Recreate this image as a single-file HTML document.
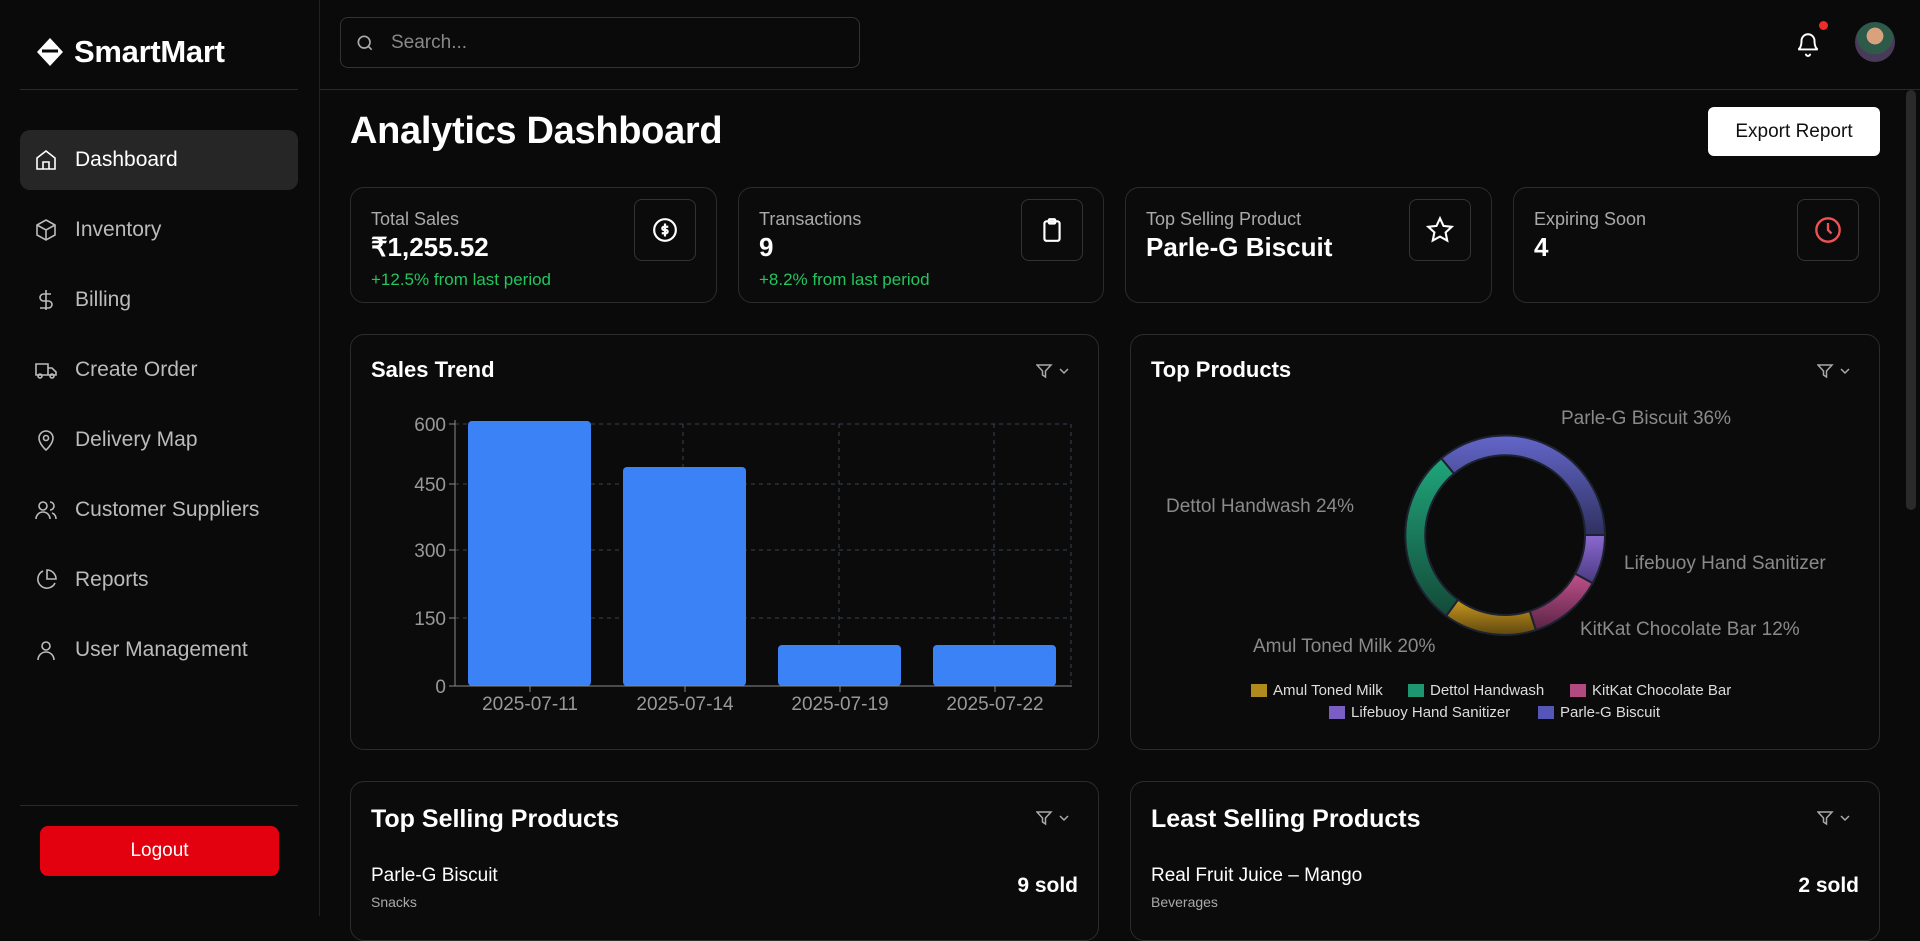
<!DOCTYPE html>
<html><head><meta charset="utf-8"><style>
*{box-sizing:border-box;margin:0;padding:0}
body{width:1920px;height:916px;overflow:hidden;background:#0a0a0a;color:#fff;font-family:"Liberation Sans",sans-serif;position:relative}
.abs{position:absolute}
.side{left:0;top:0;width:320px;height:916px;border-right:1px solid #222}
.nav{position:absolute;left:20px;width:278px;height:60px;display:flex;align-items:center;padding-left:14px;font-size:21px;color:#bbb}
.nav svg{width:24px;height:24px;margin-right:17px;stroke:#bbb;fill:none;stroke-width:1.6}
.nav.act{background:#262626;border-radius:10px;color:#fff}
.nav.act svg{stroke:#fff}
.card{position:absolute;border:1px solid #2c2c2c;border-radius:14px;background:#0b0b0b}
.lbl{font-size:18px;color:#aaa;position:absolute;left:20px;top:21px}
.val{font-size:26px;font-weight:bold;position:absolute;left:20px;top:44px}
.chg{font-size:17px;color:#22c55e;position:absolute;left:20px;top:82px}
.ib{position:absolute;right:20px;top:11px;width:62px;height:62px;border:1px solid #333;border-radius:8px;display:flex;align-items:center;justify-content:center}
.ct{position:absolute;left:20px;top:22px;font-size:22px;font-weight:bold}
.flt{position:absolute;right:26px;top:28px}
.pl{font-size:19px;fill:#8a8a8a;font-family:"Liberation Sans",sans-serif}
</style></head><body>
<div class="abs side">
 <div class="abs" style="left:36px;top:34px;display:flex;align-items:center">
  <svg width="28" height="32" viewBox="0 0 28 30"><path d="M14 1 L27 15 L14 29 L1 15Z" fill="#fff"/><path d="M6 14 L22 14" stroke="#0a0a0a" stroke-width="3"/></svg>
  <span style="font-size:31px;font-weight:bold;margin-left:10px;letter-spacing:-0.3px">SmartMart</span></div>
 <div class="abs" style="left:20px;top:89px;width:278px;height:1px;background:#2a2a2a"></div>
 <div class="nav act" style="top:130px"><svg viewBox="0 0 24 24"><path d="M3 10l9-7 9 7v11H3z"/><path d="M9 21v-7h6v7"/></svg>Dashboard</div>
 <div class="nav" style="top:200px"><svg viewBox="0 0 24 24"><path d="M12 2l9 5v10l-9 5-9-5V7z"/><path d="M3 7l9 5 9-5M12 12v10"/></svg>Inventory</div>
 <div class="nav" style="top:270px"><svg viewBox="0 0 24 24"><path d="M12 2v20M17 6H9.5a3.5 3.5 0 000 7h5a3.5 3.5 0 010 7H6"/></svg>Billing</div>
 <div class="nav" style="top:340px"><svg viewBox="0 0 24 24"><path d="M2 6h12v11H2zM14 10h4l4 4v3h-8"/><circle cx="6" cy="18" r="2"/><circle cx="18" cy="18" r="2"/></svg>Create Order</div>
 <div class="nav" style="top:410px"><svg viewBox="0 0 24 24"><path d="M12 22s7-6 7-12a7 7 0 00-14 0c0 6 7 12 7 12z"/><circle cx="12" cy="10" r="2.5"/></svg>Delivery Map</div>
 <div class="nav" style="top:480px"><svg viewBox="0 0 24 24"><circle cx="9" cy="8" r="4"/><path d="M2 21a7 7 0 0114 0M16 4a4 4 0 010 8M22 21a6 6 0 00-4-6"/></svg>Customer Suppliers</div>
 <div class="nav" style="top:550px"><svg viewBox="0 0 24 24"><path d="M21 15A9 9 0 119 3"/><path d="M13 2a9 9 0 019 9h-9z"/></svg>Reports</div>
 <div class="nav" style="top:620px"><svg viewBox="0 0 24 24"><circle cx="12" cy="8" r="4"/><path d="M4 22a8 8 0 0116 0"/></svg>User Management</div>
 <div class="abs" style="left:20px;top:805px;width:278px;height:1px;background:#2a2a2a"></div>
 <div class="abs" style="left:40px;top:826px;width:239px;height:50px;background:#e3000f;border-radius:8px;display:flex;align-items:center;justify-content:center;font-size:19px">Logout</div>
</div>
<div class="abs" style="left:320px;top:89px;width:1600px;height:1px;background:#2a2a2a"></div>
<div class="abs" style="left:340px;top:17px;width:520px;height:51px;border:1px solid #333;border-radius:8px;display:flex;align-items:center;padding-left:14px;color:#888;font-size:19px">
 <svg width="20" height="20" viewBox="0 0 24 24" fill="none" stroke="#aaa" stroke-width="2"><circle cx="11" cy="11" r="7"/><path d="M20 20l-4-4"/></svg><span style="margin-left:16px">Search...</span></div>
<svg class="abs" style="left:1795px;top:30px" width="26" height="28" viewBox="0 0 24 24" fill="none" stroke="#fff" stroke-width="1.8"><path d="M6 9a6 6 0 0112 0c0 7 3 8 3 8H3s3-1 3-8M10 21a2 2 0 004 0"/></svg>
<div class="abs" style="left:1819px;top:21px;width:9px;height:9px;border-radius:50%;background:#ef2b2b"></div>
<div class="abs" style="left:1855px;top:22px;width:40px;height:40px;border-radius:50%;background:radial-gradient(circle at 50% 35%,#d9a27c 0 25%,#2e5a4a 26% 55%,#4a3a5a 56%)"></div>
<div class="abs" style="left:1906px;top:90px;width:10px;height:420px;background:#2a2a2a;border-radius:5px"></div>
<div class="abs" style="left:350px;top:110px;font-size:38px;font-weight:bold;letter-spacing:-0.3px">Analytics Dashboard</div>
<div class="abs" style="left:1708px;top:107px;width:172px;height:49px;background:#fff;border-radius:6px;color:#111;font-size:19px;display:flex;align-items:center;justify-content:center">Export Report</div>

<div class="card" style="left:350px;top:187px;width:367px;height:116px"><div class="lbl">Total Sales</div><div class="val">₹1,255.52</div><div class="chg">+12.5% from last period</div>
<div class="ib"><svg width="26" height="26" viewBox="0 0 24 24" fill="none" stroke="#fff" stroke-width="2"><circle cx="12" cy="12" r="10"/><path d="M12 6v12M15 9h-4a1.5 1.5 0 000 3h2a1.5 1.5 0 010 3H9"/></svg></div></div>
<div class="card" style="left:738px;top:187px;width:366px;height:116px"><div class="lbl">Transactions</div><div class="val">9</div><div class="chg">+8.2% from last period</div>
<div class="ib"><svg width="26" height="26" viewBox="0 0 24 24" fill="none" stroke="#fff" stroke-width="2"><rect x="5" y="4" width="14" height="18" rx="2"/><rect x="9" y="2" width="6" height="4" rx="1"/></svg></div></div>
<div class="card" style="left:1125px;top:187px;width:367px;height:116px"><div class="lbl">Top Selling Product</div><div class="val">Parle-G Biscuit</div>
<div class="ib"><svg width="28" height="28" viewBox="0 0 24 24" fill="none" stroke="#fff" stroke-width="1.8"><path d="M12 2l3 6.5 7 .8-5.2 4.8 1.4 7L12 17.6 5.8 21l1.4-7L2 9.3l7-.8z"/></svg></div></div>
<div class="card" style="left:1513px;top:187px;width:367px;height:116px"><div class="lbl">Expiring Soon</div><div class="val">4</div>
<div class="ib"><svg width="28" height="28" viewBox="0 0 24 24" fill="none" stroke="#f05252" stroke-width="2"><circle cx="12" cy="12" r="10"/><path d="M12 6v6l3 3"/></svg></div></div>

<div class="card" style="left:350px;top:334px;width:749px;height:416px"><div class="ct">Sales Trend</div><svg class="flt" width="36" height="16" viewBox="0 0 36 16" fill="none" stroke="#aaa" stroke-width="1.5"><path d="M1 2h14l-5.5 6v6l-3-2V8z"/><path d="M24 6l4 4 4-4"/></svg></div>
<svg class="abs" style="left:350px;top:334px" width="749" height="416">
 <g stroke="#3a4150" stroke-dasharray="4 4"><path d="M105 90H721M105 150H721M105 216H721M105 284H721M333 90V352M489 90V352M644 90V352M721 90V352"/></g>
 <g fill="#3b82f6"><rect x="118" y="87" width="123" height="265" rx="4"/><rect x="273" y="133" width="123" height="219" rx="4"/><rect x="428" y="311" width="123" height="41" rx="4"/><rect x="583" y="311" width="123" height="41" rx="4"/></g>
 <path d="M105 86V352H722" stroke="#888" fill="none"/>
 <g stroke="#888"><path d="M99 90h6M99 150h6M99 216h6M99 284h6M99 352h6M180 352v6M335 352v6M490 352v6M645 352v6"/></g>
 <g font-size="19" fill="#999" text-anchor="end"><text x="96" y="97">600</text><text x="96" y="157">450</text><text x="96" y="223">300</text><text x="96" y="291">150</text><text x="96" y="359">0</text></g>
 <g font-size="19" fill="#999" text-anchor="middle"><text x="180" y="376">2025-07-11</text><text x="335" y="376">2025-07-14</text><text x="490" y="376">2025-07-19</text><text x="645" y="376">2025-07-22</text></g>
</svg>

<div class="card" style="left:1130px;top:334px;width:750px;height:416px"><div class="ct">Top Products</div><svg class="flt" width="36" height="16" viewBox="0 0 36 16" fill="none" stroke="#aaa" stroke-width="1.5"><path d="M1 2h14l-5.5 6v6l-3-2V8z"/><path d="M24 6l4 4 4-4"/></svg></div>
<svg class="abs" style="left:1130px;top:334px" width="750" height="416">
 <defs>
 <linearGradient id="g1" x1="0" y1="0" x2="0" y2="1"><stop offset="0" stop-color="#6366c9"/><stop offset="1" stop-color="#2f3160"/></linearGradient>
 <linearGradient id="g2" x1="0" y1="0" x2="0" y2="1"><stop offset="0" stop-color="#8b6ad0"/><stop offset="1" stop-color="#4a3a80"/></linearGradient>
 <linearGradient id="g3" x1="0" y1="0" x2="0" y2="1"><stop offset="0" stop-color="#c0508a"/><stop offset="1" stop-color="#5a2446"/></linearGradient>
 <linearGradient id="g4" x1="0" y1="0" x2="0" y2="1"><stop offset="0" stop-color="#c9981e"/><stop offset="1" stop-color="#5e470f"/></linearGradient>
 <linearGradient id="g5" x1="0" y1="0" x2="0" y2="1"><stop offset="0" stop-color="#20a57a"/><stop offset="1" stop-color="#134a38"/></linearGradient>
 </defs>
 <g transform="translate(375,201)" stroke="#1c2230" stroke-width="2">
 <path d="M-63.7 -76.6 A100 100 0 0 1 100 0 L80 0 A80 80 0 0 0 -51 -61.3Z" fill="url(#g1)"/>
 <path d="M100 0 A100 100 0 0 1 87.6 48.2 L70.1 38.6 A80 80 0 0 0 80 0Z" fill="url(#g2)"/>
 <path d="M87.6 48.2 A100 100 0 0 1 30.9 95.1 L24.7 76.1 A80 80 0 0 0 70.1 38.6Z" fill="url(#g3)"/>
 <path d="M30.9 95.1 A100 100 0 0 1 -58.8 80.9 L-47 64.7 A80 80 0 0 0 24.7 76.1Z" fill="url(#g4)"/>
 <path d="M-58.8 80.9 A100 100 0 0 1 -63.7 -76.6 L-51 -61.3 A80 80 0 0 0 -47 64.7Z" fill="url(#g5)"/>
 </g>
 <text class="pl" x="431" y="90">Parle-G Biscuit 36%</text>
 <text class="pl" x="36" y="178">Dettol Handwash 24%</text>
 <text class="pl" x="494" y="235">Lifebuoy Hand Sanitizer</text>
 <text class="pl" x="450" y="301">KitKat Chocolate Bar 12%</text>
 <text class="pl" x="123" y="318">Amul Toned Milk 20%</text>
 <g font-size="15" fill="#ddd">
 <rect x="121" y="350" width="16" height="13" fill="#b08a1c"/><text x="143" y="361">Amul Toned Milk</text>
 <rect x="278" y="350" width="16" height="13" fill="#1e9670"/><text x="300" y="361">Dettol Handwash</text>
 <rect x="440" y="350" width="16" height="13" fill="#b04a80"/><text x="462" y="361">KitKat Chocolate Bar</text>
 <rect x="199" y="372" width="16" height="13" fill="#7b5ec4"/><text x="221" y="383">Lifebuoy Hand Sanitizer</text>
 <rect x="408" y="372" width="16" height="13" fill="#5557b8"/><text x="430" y="383">Parle-G Biscuit</text>
 </g>
</svg>

<div class="card" style="left:350px;top:781px;width:749px;height:160px"><div class="ct" style="font-size:25px;top:23px">Top Selling Products</div><svg class="flt" width="36" height="16" viewBox="0 0 36 16" fill="none" stroke="#aaa" stroke-width="1.5"><path d="M1 2h14l-5.5 6v6l-3-2V8z"/><path d="M24 6l4 4 4-4"/></svg>
 <div class="abs" style="left:20px;top:83px;font-size:19px">Parle-G Biscuit</div><div class="abs" style="left:20px;top:112px;font-size:14px;color:#aaa">Snacks</div>
 <div class="abs" style="right:20px;top:92px;font-size:21px;font-weight:bold">9 sold</div></div>
<div class="card" style="left:1130px;top:781px;width:750px;height:160px"><div class="ct" style="font-size:25px;top:23px">Least Selling Products</div><svg class="flt" width="36" height="16" viewBox="0 0 36 16" fill="none" stroke="#aaa" stroke-width="1.5"><path d="M1 2h14l-5.5 6v6l-3-2V8z"/><path d="M24 6l4 4 4-4"/></svg>
 <div class="abs" style="left:20px;top:83px;font-size:19px">Real Fruit Juice – Mango</div><div class="abs" style="left:20px;top:112px;font-size:14px;color:#aaa">Beverages</div>
 <div class="abs" style="right:20px;top:92px;font-size:21px;font-weight:bold">2 sold</div></div>
</body></html>
